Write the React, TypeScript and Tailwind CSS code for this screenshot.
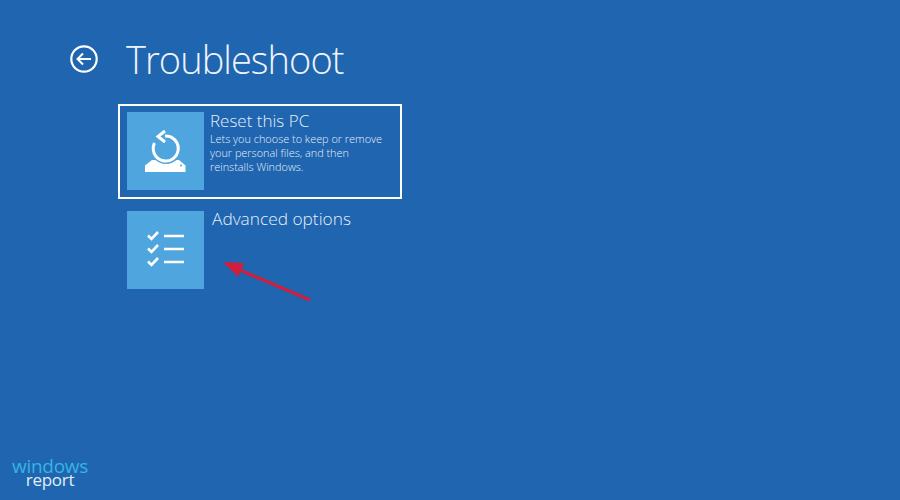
const font = { fontFamily: '"Open Sans", sans-serif' }

function BackIcon() {
  return (
    <svg width="30" height="30" viewBox="0 0 30 30" fill="none" stroke="white" strokeWidth="2.2" className="shrink-0">
      <circle cx="15" cy="15" r="12.7" />
      <path d="M22 15H8.5M14 9.5L8.5 15L14 20.5" strokeWidth="2" />
    </svg>
  )
}

function ResetIcon() {
  return (
    <svg width="78" height="78" viewBox="0 0 78 78" fill="none">
      <path d="M18 53.5L25 48H52L58.5 53.5V60H18Z" fill="white" />
      <circle cx="39" cy="36" r="16" fill="#4fa6de" />
      <path d="M38 24A12.5 12.5 0 1 1 27.5 31" stroke="white" strokeWidth="3" />
      <path d="M38 19L31 24.5L38 30" stroke="white" strokeWidth="3" />
      <circle cx="54" cy="53.5" r="1" fill="#4fa6de" />
    </svg>
  )
}

function OptionsIcon() {
  return (
    <svg width="78" height="78" viewBox="0 0 78 78" fill="none" stroke="white">
      <path d="M21 24.5L24.5 28L31 21" strokeWidth="2.6" />
      <path d="M21 37.5L24.5 41L31 34" strokeWidth="2.6" />
      <path d="M21 50.5L24.5 54L31 47" strokeWidth="2.6" />
      <path d="M37 25H57M37 38H57M37 51H57" strokeWidth="2.4" />
    </svg>
  )
}

export default function App() {
  return (
    <div className="relative w-[900px] h-[500px] overflow-hidden bg-[#1f65b0] text-white" style={font}>
      <header className="flex items-center pl-[69px] pt-[34px] h-[104px] pb-[20px]">
        <BackIcon />
        <h1 className="ml-[27px] text-[38px] leading-[50px] font-light tracking-[-0.95px] text-[#eef4fa]">Troubleshoot</h1>
      </header>

      <div className="flex flex-col pl-[118px] gap-[12px]">
        <div className="flex w-[284px] h-[95px] border-2 border-white pl-[7px] pt-[6px]">
          <div className="w-[77px] h-[78px] bg-[#4fa6de] shrink-0">
            <ResetIcon />
          </div>
          <div className="ml-[6px] w-[180px]">
            <div className="text-[17px] leading-[18px] font-light text-[#e6eff8]">Reset this PC</div>
            <p className="mt-[2px] text-[10.9px] leading-[14px] font-light text-[#e6eff8]">
              Lets you choose to keep or remove your personal files, and then reinstalls Windows.
            </p>
          </div>
        </div>

        <div className="flex pl-[9px]">
          <div className="w-[77px] h-[78px] bg-[#4fa6de] shrink-0">
            <OptionsIcon />
          </div>
          <div className="ml-[8px] text-[17.3px] leading-[16px] font-light text-[#e6eff8]">Advanced options</div>
        </div>
      </div>

      <svg className="absolute left-0 top-0 pointer-events-none" width="900" height="500" fill="none">
        <path d="M310 300L235 268" stroke="#d01f3c" strokeWidth="3.2" />
        <path d="M223 262L244 263L238 277Z" fill="#d01f3c" />
      </svg>

      <div className="absolute left-[12px] top-[459px] w-[76px] text-center">
        <div className="text-[19px] leading-[14px] tracking-[-0.3px] text-[#36b4e6]">windows</div>
        <div className="text-[17px] leading-[14px] tracking-[-0.3px] text-[#e4eef7]">report</div>
      </div>
    </div>
  )
}
